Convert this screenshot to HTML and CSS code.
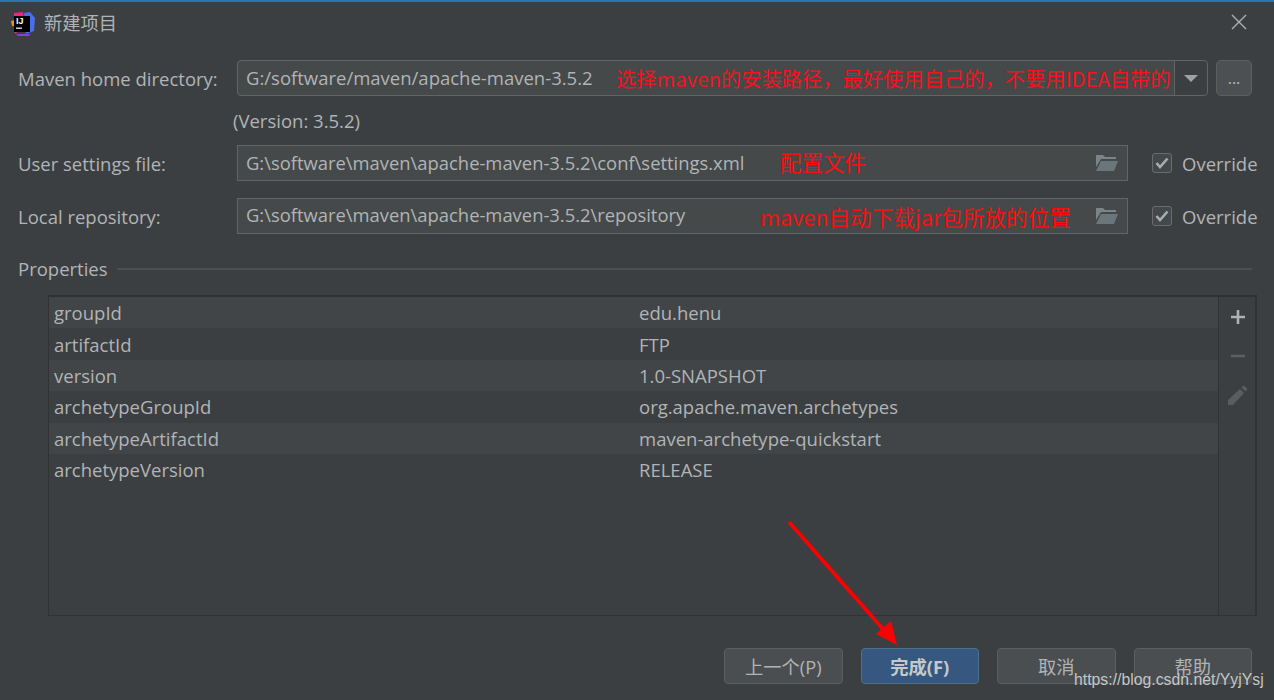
FILE: index.html
```html
<!DOCTYPE html>
<html lang="zh">
<head>
<meta charset="utf-8">
<title>新建项目</title>
<link rel="stylesheet" href="styles.css">
</head>
<body>
<div class="dialog">
  <header class="titlebar">
    <svg class="logo" width="24" height="24" viewBox="0 0 24 24">
      <path d="M3 1 L12 0 L13 6 L5 22 L3 20 Z" fill="#f0267e"/>
      <path d="M13 1 L19 0 L24 6 L23 19 L15 22 Z" fill="#4a6ee8"/>
      <path d="M0 9 L4 8 L5 14 L1 14 Z" fill="#f58a1f"/>
      <path d="M5 22 L20 22 L18 24 L7 24 Z" fill="#8a3fd0"/>
      <rect x="3" y="4" width="16" height="16" fill="#000"/>
      <rect x="5" y="15.5" width="6" height="1.4" fill="#ddd"/>
      <text x="5" y="12" class="logo-text">IJ</text>
    </svg>
    <span class="title">新建项目</span>
    <svg class="close" width="16" height="16" viewBox="0 0 16 16"><path d="M1 1 L15 15 M15 1 L1 15" stroke="#afb1b3" stroke-width="1.4" fill="none"/></svg>
  </header>

  <main class="form">
    <div class="row row-home">
      <label class="label">Maven home directory:</label>
      <div class="combo">
        <span class="value">G:/software/maven/apache-maven-3.5.2</span>
        <span class="combo-arrow"><i class="triangle"></i></span>
      </div>
      <button class="dots">...</button>
    </div>
    <div class="version">(Version: 3.5.2)</div>
    <div class="row row-settings">
      <label class="label">User settings file:</label>
      <div class="field">
        <span class="value">G:\software\maven\apache-maven-3.5.2\conf\settings.xml</span>
        <svg class="folder" width="24" height="18" viewBox="0 0 24 18"><path d="M1 1 L8 1 L10 3 L21 3 L21 5 L6 5 L1 13 Z" fill="#7d8387"/><path d="M6 7 L23 7 L19 17 L1 17 Z" fill="#6a767c"/></svg>
      </div>
      <div class="override"><span class="check"><svg width="14" height="12" viewBox="0 0 14 12"><path d="M1.5 6 L5 10 L12.5 1.5" stroke="#a9adb0" stroke-width="2.6" fill="none"/></svg></span>Override</div>
    </div>
    <div class="row row-local">
      <label class="label">Local repository:</label>
      <div class="field">
        <span class="value">G:\software\maven\apache-maven-3.5.2\repository</span>
        <svg class="folder" width="24" height="18" viewBox="0 0 24 18"><path d="M1 1 L8 1 L10 3 L21 3 L21 5 L6 5 L1 13 Z" fill="#7d8387"/><path d="M6 7 L23 7 L19 17 L1 17 Z" fill="#6a767c"/></svg>
      </div>
      <div class="override"><span class="check"><svg width="14" height="12" viewBox="0 0 14 12"><path d="M1.5 6 L5 10 L12.5 1.5" stroke="#a9adb0" stroke-width="2.6" fill="none"/></svg></span>Override</div>
    </div>

    <div class="section"><span class="section-name">Properties</span><i class="rule"></i></div>

    <div class="table-box">
      <div class="table">
        <div class="tr"><span class="k">groupId</span><span>edu.henu</span></div>
        <div class="tr"><span class="k">artifactId</span><span>FTP</span></div>
        <div class="tr"><span class="k">version</span><span>1.0-SNAPSHOT</span></div>
        <div class="tr"><span class="k">archetypeGroupId</span><span>org.apache.maven.archetypes</span></div>
        <div class="tr"><span class="k">archetypeArtifactId</span><span>maven-archetype-quickstart</span></div>
        <div class="tr"><span class="k">archetypeVersion</span><span>RELEASE</span></div>
      </div>
      <div class="tools">
        <svg width="16" height="16" viewBox="0 0 16 16"><path d="M8 1 V15 M1 8 H15" stroke="#afb1b3" stroke-width="2.6"/></svg>
        <svg width="16" height="16" viewBox="0 0 16 16"><path d="M1 8 H15" stroke="#5c5f61" stroke-width="2.6"/></svg>
        <svg class="pencil" width="22" height="22" viewBox="0 0 22 22"><path d="M1 21 L1 16 L13 5 L17 9 L6 21 Z M14.5 3.5 L16.5 1.5 L20.5 5 L18.5 7.5 Z" fill="#5a5d5f"/></svg>
      </div>
    </div>
  </main>

  <footer class="buttons">
    <button class="btn">上一个(P)</button>
    <button class="btn primary">完成(F)</button>
    <button class="btn">取消</button>
    <button class="btn">帮助</button>
  </footer>

  <span class="note note-home">选择maven的安装路径，最好使用自己的，不要用IDEA自带的</span>
  <span class="note note-settings">配置文件</span>
  <span class="note note-local">maven自动下载jar包所放的位置</span>
  <svg class="arrow" width="120" height="130" viewBox="0 0 120 130"><path d="M2 4 L102 118" stroke="#fe0000" stroke-width="3.6" fill="none"/><path d="M110 127 L89 116 L104 103 Z" fill="#fe0000"/></svg>
  <span class="watermark">https://blog.csdn.net/YyjYsj</span>
</div>
</body>
</html>
```
FILE: styles.css
```css
* { box-sizing: border-box; }
html, body { margin: 0; padding: 0; }
body {
  width: 1274px;
  height: 700px;
  overflow: hidden;
  background: #3c3f41;
  font-family: "Open Sans", "Noto Sans CJK SC", sans-serif;
  font-size: 18.5px;
  color: #b1b4b6;
}
.dialog {
  position: relative;
  width: 1274px;
  height: 700px;
  border-top: 2px solid #2a74b4;
  display: flex;
  flex-direction: column;
}
.titlebar {
  display: flex;
  align-items: center;
  height: 43px;
  padding: 0 27px 0 11px;
}
.logo { flex: none; margin-right: 9px; }
.logo-text { font: 700 9px "Liberation Sans", sans-serif; fill: #fff; }
.title { font-family: "Noto Sans CJK SC", sans-serif; font-size: 18.3px; flex: 1; color: #b1b4b6; margin-bottom: 3px; }
.close { flex: none; margin-bottom: 3px; }

.form { padding: 0 17px 0 18px; display: flex; flex-direction: column; }
.row { display: flex; align-items: center; height: 36px; }
.row-home { margin-top: 15px; }
.label { width: 219px; flex: none; }
.combo, .field {
  display: flex;
  align-items: center;
  background: #45494a;
  border: 1px solid #646464;
  height: 36px;
  padding-left: 8px;
}
.combo { width: 971px; border-radius: 4px; flex: none; }
.combo .value { flex: 1; padding-bottom: 2px; }
.combo-arrow {
  flex: none;
  width: 33px;
  height: 100%;
  border-left: 1px solid #646464;
  background: #3c3f41;
  border-radius: 0 4px 4px 0;
  display: flex;
  align-items: center;
  justify-content: center;
}
.triangle { width: 0; height: 0; border-left: 7px solid transparent; border-right: 7px solid transparent; border-top: 7px solid #9fa1a3; }
.dots {
  margin-left: 8px;
  width: 36px;
  height: 36px;
  flex: none;
  border: 1px solid #5e6060;
  border-radius: 5px;
  background: #4c5052;
  color: #bbb;
  font: 16px "Open Sans", sans-serif;
  padding: 0;
}
.version { height: 49px; padding: 0 0 0 215px; line-height: 50px; }
.field { width: 891px; flex: none; justify-content: space-between; padding-right: 8px; }
.field .value { padding-bottom: 2px; font-size: 18.4px; }
.row-local .field .value { padding-bottom: 4px; }
.override { margin-left: 24px; display: flex; align-items: center; gap: 10px; flex: none; }
.check {
  width: 20px;
  height: 20px;
  border: 1px solid #6b6b6b;
  border-radius: 3px;
  background: #43494a;
  display: flex;
  align-items: center;
  justify-content: center;
}
.row-local { margin-top: 17px; }

.section { display: flex; align-items: center; margin-top: 19px; height: 32px; gap: 9px; }
.section-name { padding-bottom: 2px; }
.rule { flex: 1; height: 2px; background: #4d5052; margin-right: 5px; }

.table-box {
  margin: 10px 0 0 30px;
  height: 321px;
  border-top: 2px solid #2f3133;
  border-left: 1px solid #323232;
  border-right: 2px solid #323232;
  border-bottom: 1px solid #323232;
  display: flex;
}
.table { width: 1169px; flex: none; }
.tr { display: flex; height: 31.4px; align-items: center; padding-left: 5px; }
.tr:nth-child(odd) { background: #414547; }
.k { width: 585px; flex: none; }
.tools {
  flex: 1;
  border-left: 1px solid #323232;
  display: flex;
  flex-direction: column;
  align-items: center;
  gap: 23px;
  padding: 12px 0 0 2px;
}
.pencil { margin-top: -3px; }

.buttons { display: flex; justify-content: flex-end; gap: 18px; padding-right: 22px; margin-top: 32px; }
.btn {
  width: 118.5px;
  height: 36px;
  background: #4a4e50;
  border: 1px solid #5c5e60;
  border-radius: 4px;
  color: #b1b4b6;
  font-family: "Open Sans", "Noto Sans CJK SC", sans-serif;
  font-size: 18.3px;
  padding: 0;
}
.primary { background: #365880; border-color: #4c708c; color: #c6c9cc; font-weight: 700; }

.note {
  position: absolute;
  color: #f5111e;
  font-family: "Noto Sans CJK SC", "Noto Sans", sans-serif;
  font-size: 20.3px;
  line-height: 26px;
  white-space: nowrap;
}
.note-home { left: 616px; top: 63px; }
.note-settings { left: 780px; top: 147px; font-size: 21.5px; color: #f81010; }
.note-local { left: 760px; top: 202px; font-size: 21.6px; color: #fb0d0d; }
.arrow { position: absolute; left: 787px; top: 516px; }
.watermark {
  position: absolute;
  left: 1074px;
  top: 669px;
  font: 15.8px "Liberation Sans", sans-serif;
  color: #c4c6c8;
}
```
